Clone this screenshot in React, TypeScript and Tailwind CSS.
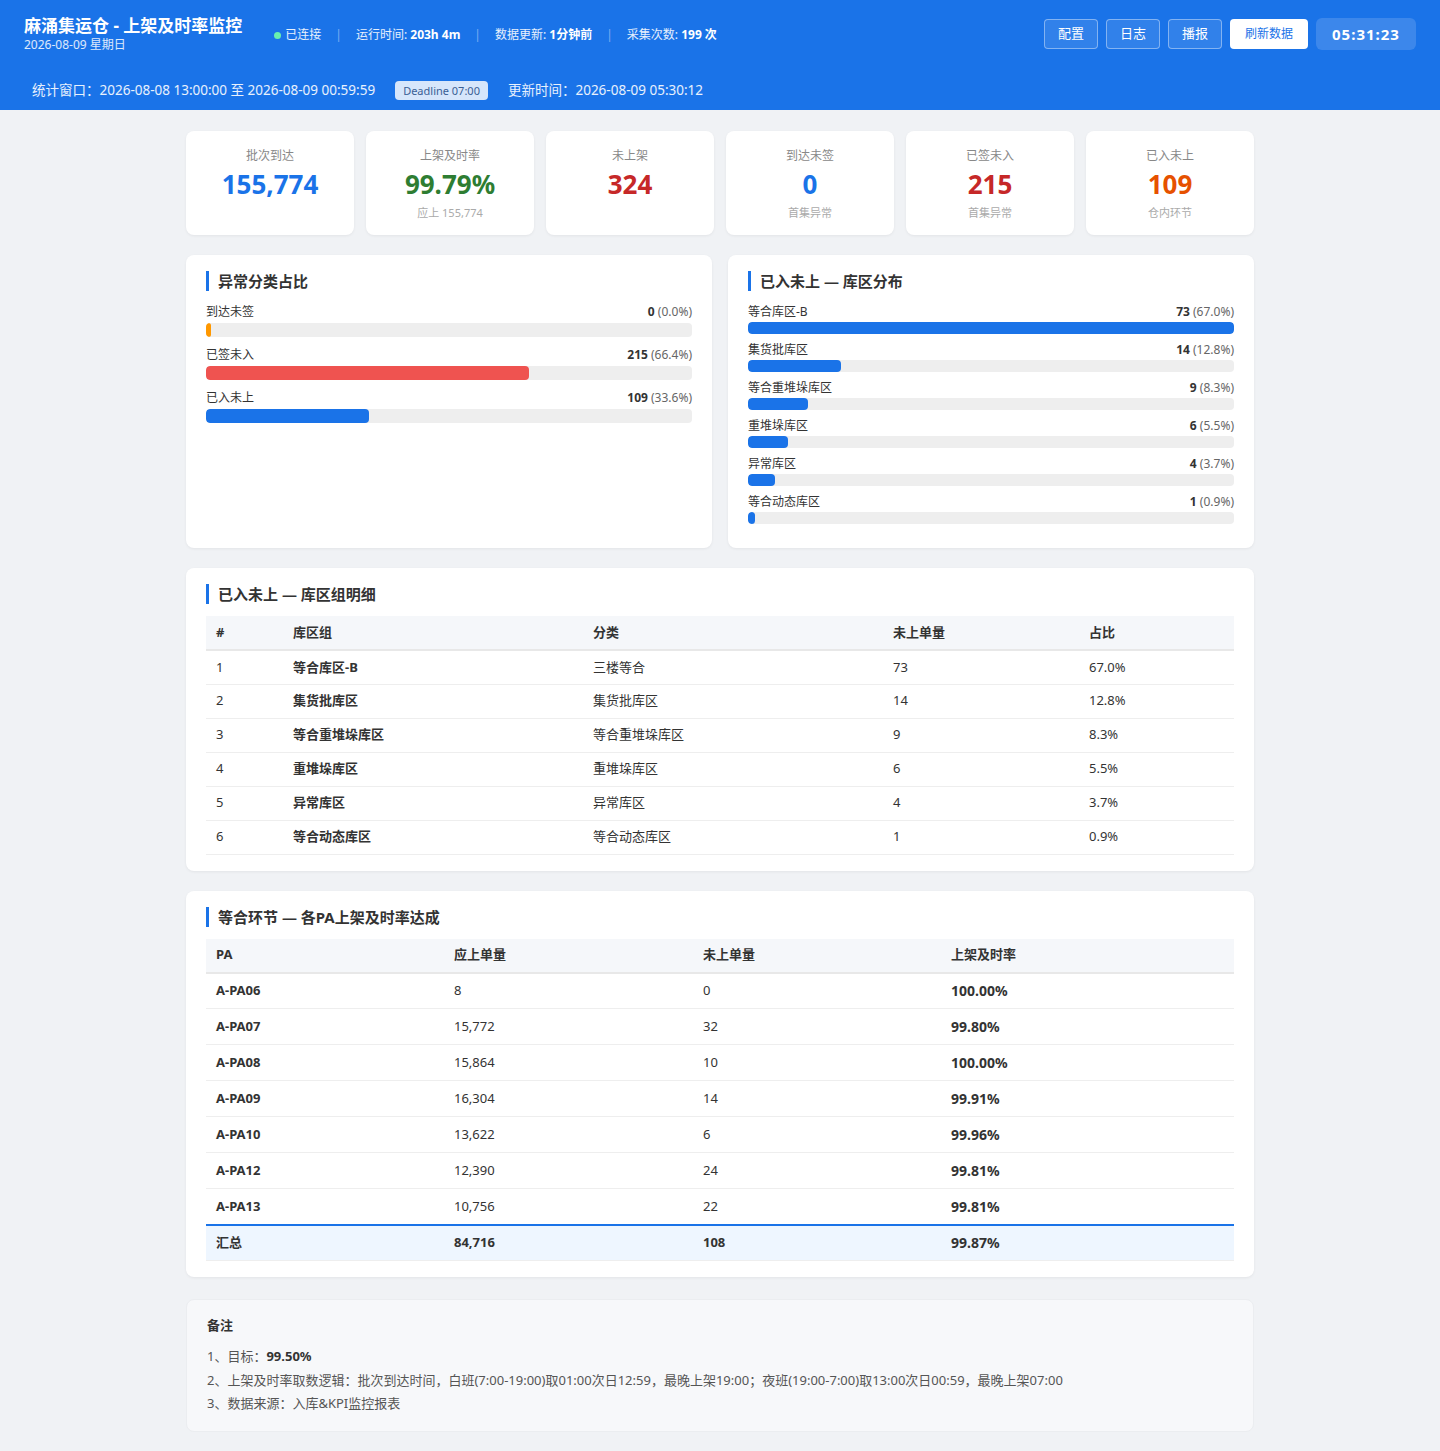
import React from "react"

const FONT = { fontFamily: '"Noto Sans", "Noto Sans CJK SC", sans-serif' }

const kpis = [
	{ label: "批次到达", value: "155,774", color: "text-[#1a73e8]", sub: "" },
	{ label: "上架及时率", value: "99.79%", color: "text-[#2e7d32]", sub: "应上 155,774" },
	{ label: "未上架", value: "324", color: "text-[#c62828]", sub: "" },
	{ label: "到达未签", value: "0", color: "text-[#1a73e8]", sub: "首集异常" },
	{ label: "已签未入", value: "215", color: "text-[#c62828]", sub: "首集异常" },
	{ label: "已入未上", value: "109", color: "text-[#e65100]", sub: "仓内环节" },
]

const categories = [
	{ name: "到达未签", count: 0, pct: 0, bar: "bg-[#ff9800]" },
	{ name: "已签未入", count: 215, pct: 66.4, bar: "bg-[#ef5350]" },
	{ name: "已入未上", count: 109, pct: 33.6, bar: "bg-[#1a73e8]" },
]

const zones = [
	{ name: "等合库区-B", cat: "三楼等合", count: 73, pct: "67.0%" },
	{ name: "集货批库区", cat: "集货批库区", count: 14, pct: "12.8%" },
	{ name: "等合重堆垛库区", cat: "等合重堆垛库区", count: 9, pct: "8.3%" },
	{ name: "重堆垛库区", cat: "重堆垛库区", count: 6, pct: "5.5%" },
	{ name: "异常库区", cat: "异常库区", count: 4, pct: "3.7%" },
	{ name: "等合动态库区", cat: "等合动态库区", count: 1, pct: "0.9%" },
]

const paRows = [
	{ pa: "A-PA06", due: "8", left: "0", rate: "100.00%" },
	{ pa: "A-PA07", due: "15,772", left: "32", rate: "99.80%" },
	{ pa: "A-PA08", due: "15,864", left: "10", rate: "100.00%" },
	{ pa: "A-PA09", due: "16,304", left: "14", rate: "99.91%" },
	{ pa: "A-PA10", due: "13,622", left: "6", rate: "99.96%" },
	{ pa: "A-PA12", due: "12,390", left: "24", rate: "99.81%" },
	{ pa: "A-PA13", due: "10,756", left: "22", rate: "99.81%" },
]

const SectionTitle = ({ children }: { children: React.ReactNode }) => (
	<div className="flex items-center h-5 border-l-[3px] border-[#1a73e8] pl-[9px] text-[15px] font-bold text-[#333] leading-5">
		{children}
	</div>
)

const Sep = () => <span className="mx-[14px] text-white/40">|</span>

export default function App() {
	const maxZone = Math.max(...zones.map((z) => z.count))

	return (
		<div className="min-h-[1451px] bg-[#f0f2f5] text-[#333]" style={FONT}>
			{/* header */}
			<header className="bg-[#1a73e8] text-white px-6 pt-[14px]">
				<div className="flex items-center justify-between h-10">
					<div className="flex items-center">
						<div>
							<div className="text-[17px] font-bold leading-[22px]">麻涌集运仓 - 上架及时率监控</div>
							<div className="text-[12px] leading-4 text-white/85">2026-08-09 星期日</div>
						</div>
						<div className="flex items-center ml-[32px] mt-[2px] text-[12px] text-white/90">
							<span className="w-[7px] h-[7px] rounded-full bg-[#69f0ae] mr-[4px]" />
							<span>已连接</span>
							<Sep />
							<span>
								运行时间: <b className="text-white">203h 4m</b>
							</span>
							<Sep />
							<span>
								数据更新: <b className="text-white">1分钟前</b>
							</span>
							<Sep />
							<span>
								采集次数: <b className="text-white">199 次</b>
							</span>
						</div>
					</div>
					<div className="flex items-center gap-2">
						{["配置", "日志", "播报"].map((b) => (
							<button
								key={b}
								className="h-[30px] w-[54px] rounded border border-white/40 bg-white/10 text-[13px] text-white"
							>
								{b}
							</button>
						))}
						<button className="h-[30px] w-[78px] rounded bg-white text-[12px] text-[#1a73e8]">刷新数据</button>
						<div className="h-8 w-[100px] rounded-md bg-white/15 flex items-center justify-center text-[15px] font-bold tracking-[1px]">
							05:31:23
						</div>
					</div>
				</div>
				<div className="flex items-center h-10 mt-4 px-2 text-[13.5px] text-white/90">
					<span>统计窗口：2026-08-08 13:00:00 至 2026-08-09 00:59:59</span>
					<span className="ml-5 h-[19px] px-2 rounded bg-[#d6e6fb] text-[#3a5f95] text-[11px] leading-[19px]">
						Deadline 07:00
					</span>
					<span className="ml-5">更新时间：2026-08-09 05:30:12</span>
				</div>
			</header>

			<main className="w-[1068px] mx-auto pt-[21px] pb-[21px] flex flex-col gap-5">
				{/* KPI cards */}
				<div className="grid grid-cols-6 gap-3">
					{kpis.map((k) => (
						<div
							key={k.label}
							className="h-[104px] bg-white rounded-lg shadow-[0_1px_3px_rgba(0,0,0,0.06)] pt-[17px] text-center"
						>
							<div className="text-[12px] leading-4 text-[#888]">{k.label}</div>
							<div className={`mt-[4px] text-[26px] font-bold leading-8 ${k.color}`}>{k.value}</div>
							{k.sub && <div className="mt-[6px] text-[11px] leading-[14px] text-[#aaa]">{k.sub}</div>}
						</div>
					))}
				</div>

				{/* two panels */}
				<div className="grid grid-cols-2 gap-4">
					<div className="bg-white rounded-lg shadow-[0_1px_3px_rgba(0,0,0,0.06)] px-5 pt-4 pb-6">
						<SectionTitle>异常分类占比</SectionTitle>
						<div className="mt-3">
							{categories.map((c) => (
								<div key={c.name} className="mb-[9px] last:mb-0">
									<div className="flex justify-between h-[18px] items-center text-[12px]">
										<span>{c.name}</span>
										<span>
											<b>{c.count}</b> <span className="text-[#666]">({c.pct.toFixed(1)}%)</span>
										</span>
									</div>
									<div className="mt-[2px] h-[14px] rounded bg-[#eeeeee] overflow-hidden">
										<div
											className={`h-full rounded ${c.bar}`}
											style={{ width: c.pct === 0 ? "5px" : `${c.pct}%` }}
										/>
									</div>
								</div>
							))}
						</div>
					</div>
					<div className="bg-white rounded-lg shadow-[0_1px_3px_rgba(0,0,0,0.06)] px-5 pt-4 pb-6">
						<SectionTitle>已入未上 — 库区分布</SectionTitle>
						<div className="mt-3">
							{zones.map((z) => (
								<div key={z.name} className="mb-[7px] last:mb-0">
									<div className="flex justify-between h-[18px] items-center text-[12px]">
										<span>{z.name}</span>
										<span>
											<b>{z.count}</b> <span className="text-[#666]">({z.pct})</span>
										</span>
									</div>
									<div className="mt-[1px] h-3 rounded bg-[#eeeeee] overflow-hidden">
										<div
											className="h-full rounded bg-[#1a73e8]"
											style={{ width: `${(z.count / maxZone) * 100}%` }}
										/>
									</div>
								</div>
							))}
						</div>
					</div>
				</div>

				{/* zone detail table */}
				<div className="bg-white rounded-lg shadow-[0_1px_3px_rgba(0,0,0,0.06)] px-5 pt-4 pb-4">
					<SectionTitle>已入未上 — 库区组明细</SectionTitle>
					<table className="mt-3 w-full table-fixed border-collapse text-[13px]">
						<colgroup>
							<col className="w-[77px]" />
							<col className="w-[300px]" />
							<col className="w-[300px]" />
							<col className="w-[196px]" />
							<col />
						</colgroup>
						<thead>
							<tr className="bg-[#f5f7fa] border-b-2 border-[#e8e8e8]">
								{["#", "库区组", "分类", "未上单量", "占比"].map((h) => (
									<th key={h} className="h-[34px] px-[10px] text-left font-bold">
										{h}
									</th>
								))}
							</tr>
						</thead>
						<tbody>
							{zones.map((z, i) => (
								<tr key={z.name} className="border-b border-[#eeeeee]">
									<td className="h-[34px] px-[10px]">{i + 1}</td>
									<td className="px-[10px] font-bold">{z.name}</td>
									<td className="px-[10px]">{z.cat}</td>
									<td className="px-[10px]">{z.count}</td>
									<td className="px-[10px]">{z.pct}</td>
								</tr>
							))}
						</tbody>
					</table>
				</div>

				{/* PA table */}
				<div className="bg-white rounded-lg shadow-[0_1px_3px_rgba(0,0,0,0.06)] px-5 pt-4 pb-4">
					<SectionTitle>等合环节 — 各PA上架及时率达成</SectionTitle>
					<table className="mt-3 w-full table-fixed border-collapse text-[13px]">
						<colgroup>
							<col className="w-[238px]" />
							<col className="w-[249px]" />
							<col className="w-[248px]" />
							<col />
						</colgroup>
						<thead>
							<tr className="bg-[#f5f7fa] border-b-2 border-[#e8e8e8]">
								{["PA", "应上单量", "未上单量", "上架及时率"].map((h) => (
									<th key={h} className="h-[34px] px-[10px] text-left font-bold">
										{h}
									</th>
								))}
							</tr>
						</thead>
						<tbody>
							{paRows.map((r, i) => (
								<tr
									key={r.pa}
									className={i === paRows.length - 1 ? "border-b-2 border-[#1a73e8]" : "border-b border-[#eeeeee]"}
								>
									<td className="h-[36px] px-[10px] font-bold">{r.pa}</td>
									<td className="px-[10px]">{r.due}</td>
									<td className="px-[10px]">{r.left}</td>
									<td className="px-[10px] font-bold text-[14px]">{r.rate}</td>
								</tr>
							))}
							<tr className="bg-[#eef6ff] border-b border-[#eeeeee] font-bold">
								<td className="h-[36px] px-[10px]">汇总</td>
								<td className="px-[10px]">84,716</td>
								<td className="px-[10px]">108</td>
								<td className="px-[10px] text-[14px]">99.87%</td>
							</tr>
						</tbody>
					</table>
				</div>

				{/* notes */}
				<div className="mt-[2px] bg-[#f7f8fa] border border-[#ebedf0] rounded-lg px-5 pt-4 pb-[15px] text-[13px] text-[#555]">
					<div className="font-bold text-[#333] leading-[18px]">备注</div>
					<div className="mt-[11px] leading-[23.5px]">
						<div>
							1、目标：<b className="text-[#333]">99.50%</b>
						</div>
						<div>
							2、上架及时率取数逻辑：批次到达时间，白班(7:00-19:00)取01:00次日12:59，最晚上架19:00；夜班(19:00-7:00)取13:00次日00:59，最晚上架07:00
						</div>
						<div>3、数据来源：入库&amp;KPI监控报表</div>
					</div>
				</div>
			</main>
		</div>
	)
}
